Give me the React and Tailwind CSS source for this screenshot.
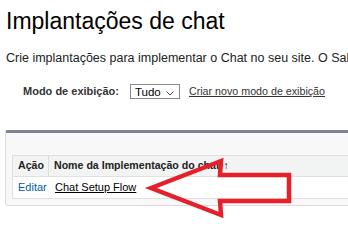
import React from 'react';

const App = () => {
  return (
    <div className="relative w-[348px] h-[223px] overflow-hidden bg-white font-['Liberation_Sans',Arial,sans-serif] text-black">
      <h1 className="pl-[6px] pt-[10px] text-[23px] leading-[23px] whitespace-nowrap">
        Implantações de chat
      </h1>
      <p className="pl-[6px] mt-[18px] text-[12.5px] leading-[15px] whitespace-nowrap text-[#222]">
        Crie implantações para implementar o Chat no seu site. O Salesforce
      </p>

      <div className="flex items-center h-[15px] mt-[18px] pl-[23px] text-[11px] leading-[15px]">
        <span className="font-bold text-[#333]">Modo de exibição:</span>
        <div className="ml-[11px] w-[50px] h-[15px] border border-[#8a8a8a] flex items-center justify-between pl-[4px] pr-[5px] bg-white">
          <span className="text-[11.5px] leading-[13px] pt-[2px]">Tudo</span>
          <svg width="8" height="5" viewBox="0 0 8 5" className="mt-[3px]">
            <path d="M0.5 0.5 L4 4 L7.5 0.5" fill="none" stroke="#555" strokeWidth="1" />
          </svg>
        </div>
        <a className="ml-[9px] text-[10.7px] underline text-[#333] cursor-pointer">Criar novo modo de exibição</a>
      </div>

      <div className="ml-[5px] mt-[31px] w-[360px] bg-[#f8f8f8] border border-[#dddbda] border-t-[3px] border-t-[#7b8196] rounded-[3px] pt-[22px] pb-[6px] pl-[6px]">
        <div className="border-l border-[#e0e0e0]">
          <div className="flex h-[22px] bg-[#f2f3f3] border-t border-b border-[#e0e0e0] text-[10.6px] font-bold text-[#222] items-center">
            <div className="w-[36px] h-full flex items-center pl-[5px] border-r border-[#dcdcdc]">Ação</div>
            <div className="pl-[5px] whitespace-nowrap">
              Nome da Implementação do chat<span className="ml-[4px] font-normal">↑</span>
            </div>
          </div>
          <div className="flex h-[22px] bg-white border-b border-[#e0e0e0] text-[11px] items-center">
            <div className="w-[37px] pl-[5px] text-[#015ba7]">Editar</div>
            <a className="pl-[5px] underline text-black cursor-pointer">Chat Setup Flow</a>
          </div>
        </div>
      </div>

      <svg className="absolute left-0 top-0" width="348" height="223" viewBox="0 0 348 223">
        <polygon
          points="151,188 221,161 220,175 289,175 289,201 220,201 221,215"
          fill="none"
          stroke="#e5202a"
          strokeWidth="4.5"
          strokeLinejoin="miter"
        />
      </svg>
    </div>
  );
};

export default App;
